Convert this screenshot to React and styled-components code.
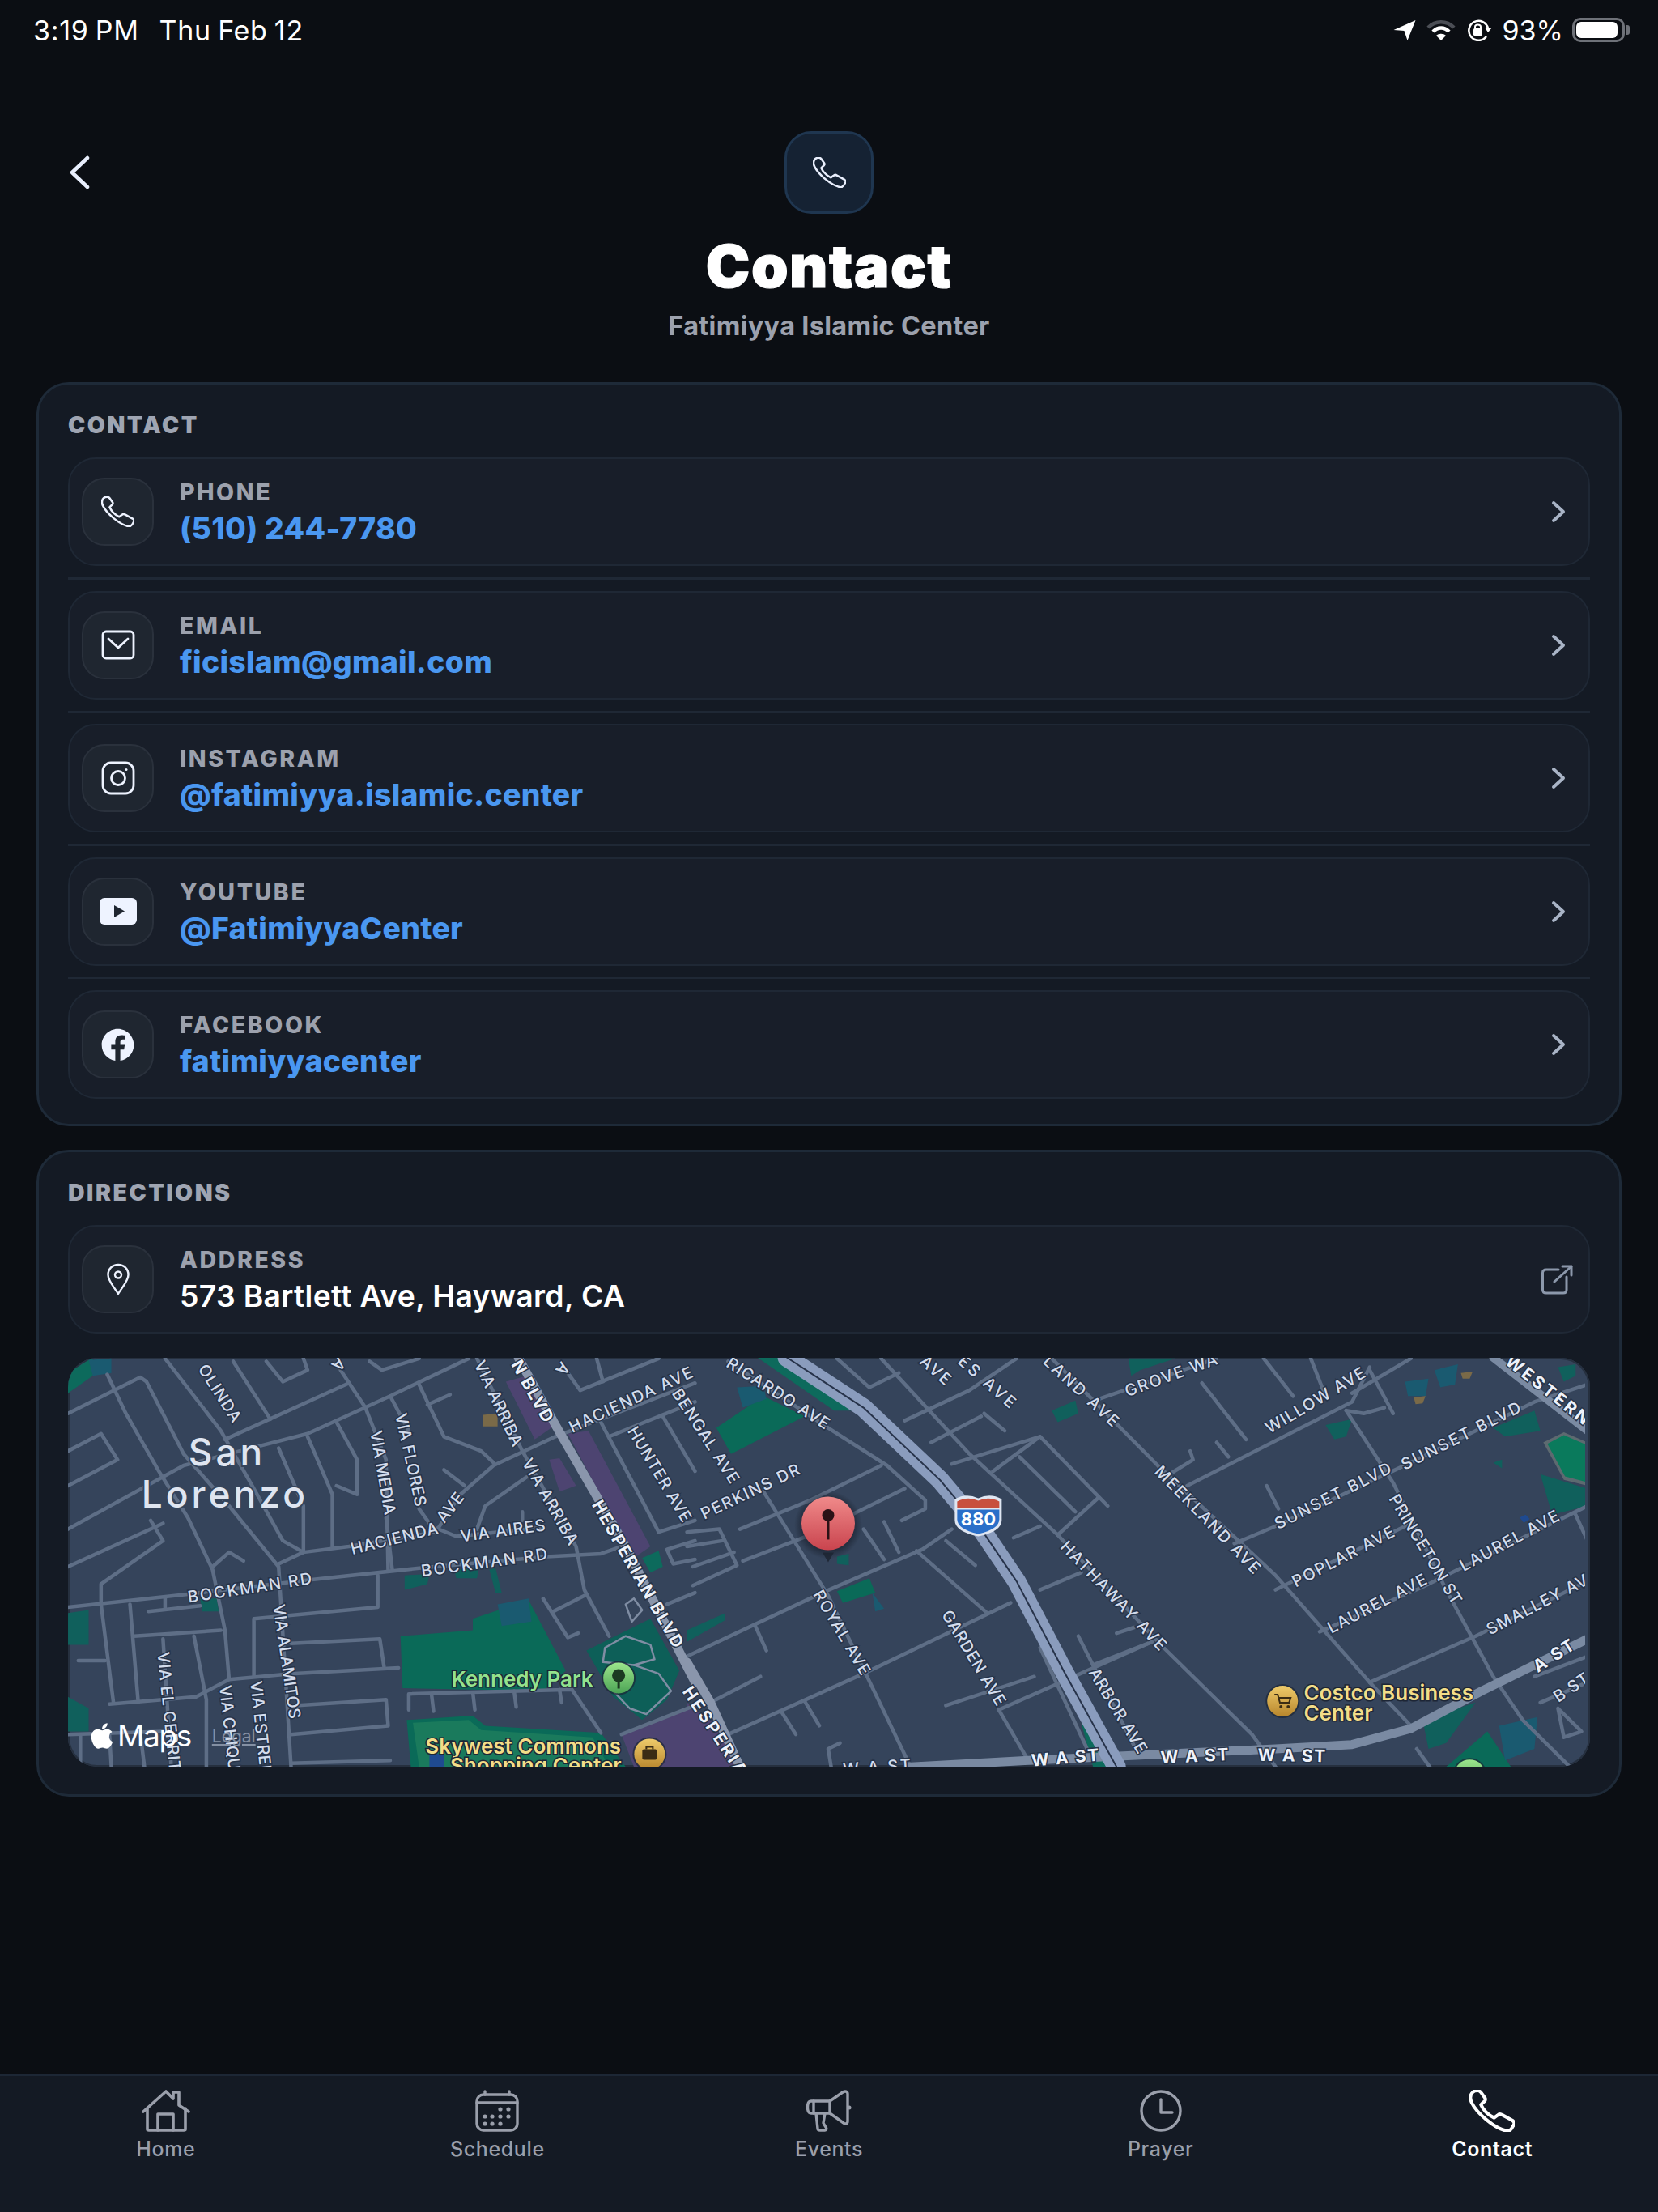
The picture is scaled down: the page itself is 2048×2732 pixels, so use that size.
import React from 'react'
import styled, {createGlobalStyle} from 'styled-components'
import {FaApple, FaFacebook} from 'react-icons/fa'

const GlobalStyle = createGlobalStyle`
    html, body {
        margin: 0;
        padding: 0;
        background: #0b0e13;
        font-family: Inter, "Liberation Sans", sans-serif;
    }
    * {
        box-sizing: border-box;
    }
`
const Page = styled.div`
    display: flex;
    flex-direction: column;
    width: 2048px;
    height: 2732px;
    overflow: hidden;
    background: #0b0e13;
`
const StatusBar = styled.div`
    display: flex;
    align-items: center;
    justify-content: space-between;
    height: 74px;
    padding: 0 37px 0 41px;
    color: #fff;
    font-size: 34px;
    font-weight: 400;
`
const StatusClock = styled.div`
    display: flex;
    gap: 25px;
    letter-spacing: 0.7px;
    word-spacing: -2px;
`
const StatusIcons = styled.div`
    display: flex;
    align-items: center;
    gap: 13px;
`
const Battery = styled.div`
    position: relative;
    width: 65px;
    height: 30px;
    margin: 0 4px 0 -2px;
    padding: 2px;
    border: 3px solid #6e7178;
    border-radius: 10px;
    &::before {
        content: '';
        display: block;
        height: 100%;
        width: 93%;
        background: #fff;
        border-radius: 6px;
    }
    &::after {
        content: '';
        position: absolute;
        right: -9px;
        top: 6px;
        width: 4px;
        height: 12px;
        background: #6e7178;
        border-radius: 0 3px 3px 0;
    }
`
const Header = styled.header`
    position: relative;
    display: flex;
    flex-direction: column;
    align-items: center;
    padding: 88px 0 49px;
`
const BackButton = styled.div`
    position: absolute;
    left: 85px;
    top: 118px;
    color: #e8eefc;
    svg {
        display: block;
    }
`
const HeaderIcon = styled.div`
    display: flex;
    align-items: center;
    justify-content: center;
    width: 110px;
    height: 102px;
    background: #152233;
    border: 3px solid #1f3650;
    border-radius: 33px;
    color: #e8eefc;
`
const Title = styled.h1`
    margin: 23px 0 0;
    color: #fff;
    font-size: 73px;
    line-height: 84px;
    font-weight: 900;
    letter-spacing: 1.5px;
    -webkit-text-stroke: 1.2px #fff;
`
const Subtitle = styled.p`
    margin: 12px 0 0;
    color: #9ca1ad;
    font-size: 32.5px;
    line-height: 40px;
    font-weight: 700;
    letter-spacing: 0.3px;
`
const Card = styled.section`
    margin: 0 45px 29px;
    padding: 32px 36px ${(p) => p.$bottom}px;
    background: #141a24;
    border: 3px solid #1e2a38;
    border-radius: 40px;
`
const SectionLabel = styled.h2`
    margin: 0 0 22px;
    color: #9fa5b2;
    font-size: 28.5px;
    line-height: 36px;
    font-weight: 900;
    letter-spacing: 2.5px;
`
const Row = styled.div`
    display: flex;
    align-items: center;
    height: 134px;
    padding: 0 28px 0 15px;
    background: #181e29;
    border: 2.5px solid #1f2835;
    border-radius: 34px;
`
const Divider = styled.div`
    height: 2.5px;
    margin: 14px 0;
    background: #1f2835;
`
const IconBox = styled.div`
    display: flex;
    align-items: center;
    justify-content: center;
    flex: none;
    width: 89px;
    height: 84px;
    margin-right: 31px;
    background: #1f2630;
    border: 2.5px solid #2a313c;
    border-radius: 28px;
    color: #eef3ff;
`
const RowText = styled.div`
    display: flex;
    flex-direction: column;
    flex: 1;
    gap: 4px;
    margin-top: 2px;
    padding-left: 1px;
`
const RowLabel = styled.div`
    color: #9ca1ad;
    font-size: 28.5px;
    line-height: 36px;
    font-weight: 800;
    letter-spacing: 2.6px;
`
const RowValue = styled.div`
    color: ${(p) => (p.$plain ? '#fff' : '#4a97f0')};
    font-size: ${(p) => (p.$plain ? 37.3 : 37.3)}px;
    line-height: 46px;
    font-weight: ${(p) => (p.$plain ? 600 : 800)};
    letter-spacing: 0.3px;
`
const RowAction = styled.div`
    flex: none;
    display: flex;
    margin-right: ${(p) => p.$shift || 0}px;
    color: ${(p) => p.$color || '#a9b4c6'};
`
const MapFrame = styled.div`
    position: relative;
    height: 505px;
    margin-top: 30px;
    overflow: hidden;
    background: #35445b;
    border-radius: 36px;
    box-shadow: inset 0 0 0 2px #26303f;
    svg.map {
        display: block;
    }
`
const Attribution = styled.div`
    position: absolute;
    left: 24px;
    bottom: 16px;
    display: flex;
    align-items: center;
    color: #fff;
`
const MapsWord = styled.span`
    font-size: 37px;
    line-height: 44px;
    letter-spacing: -1.4px;
    margin-left: 1px;
    font-weight: 400;
`
const Legal = styled.span`
    margin-left: 26px;
    color: #8490a3;
    font-size: 21px;
    text-decoration: underline;
`
const TabBar = styled.nav`
    display: grid;
    grid-template-columns: repeat(5, 1fr);
    height: 171px;
    margin-top: auto;
    padding-top: 17px;
    background: #141a24;
    border-top: 3px solid #1d2735;
`
const Tab = styled.div`
    display: flex;
    flex-direction: column;
    align-items: center;
    color: ${(p) => (p.$active ? '#fff' : '#9a9fab')};
`
const TabIcon = styled.div`
    display: flex;
    align-items: center;
    justify-content: center;
    height: 52px;
`
const TabLabel = styled.span`
    margin-top: 6px;
    font-size: 25px;
    line-height: 30px;
    font-weight: ${(p) => (p.$active ? 600 : 500)};
    letter-spacing: 0.6px;
`

// map pieces
const Road = styled.polyline`
    fill: none;
    stroke: ${(p) => p.$color || '#5e6e86'};
    stroke-width: ${(p) => p.$width || 4.5}px;
    stroke-linejoin: round;
    stroke-linecap: round;
`
const Area = styled.polygon`
    fill: ${(p) => p.$fill};
`
const StreetName = styled.text`
    font-family: Inter, "Liberation Sans", sans-serif;
    font-size: ${(p) => (p.$bright ? 21 : 20)}px;
    font-weight: ${(p) => (p.$bright ? 700 : 500)};
    fill: ${(p) => (p.$bright ? '#eef2fa' : '#d3dcec')};
    stroke: #263348;
    stroke-width: 3px;
    paint-order: stroke;
    text-anchor: middle;
    dominant-baseline: central;
`
const CityName = styled.text`
    font-family: Inter, "Liberation Sans", sans-serif;
    font-size: 46px;
    font-weight: 500;
    fill: #dfe5f0;
    stroke: #35445b;
    stroke-width: 4px;
    paint-order: stroke;
    text-anchor: middle;
    letter-spacing: 4px;
`
const PoiName = styled.text`
    font-family: Inter, "Liberation Sans", sans-serif;
    font-size: 26px;
    font-weight: 600;
    fill: ${(p) => p.$color};
    stroke: #1d2636;
    stroke-width: 3px;
    paint-order: stroke;
`

// zoomed reference coordinates -> page coordinates
const A = (x, y) => [60 + x / 1.96, 1660 + y / 2.8]
const B = (x, y) => [850 + x * 0.727, 1660 + y / 2.8]
const O = (x, y) => [x * 1.743, y * 1.743]

const toPoints = (flat, conv) => {
    const out = []
    for (let i = 0; i < flat.length; i += 2) out.push(conv(flat[i], flat[i + 1]).join(','))
    return out.join(' ')
}

const areasA = [
    ['#0d6a5c', [50, 170, 50, 100, 100, 55, 110, 50, 110, 110]],
    ['#1a5a70', [100, 55, 155, 50, 155, 100, 110, 110]],
    ['#0a6a58', [855, 1010, 1030, 990, 1030, 950, 1165, 885, 1255, 1130, 1200, 1200, 860, 1190]],
    ['#1a5a70', [1090, 900, 1165, 880, 1172, 960, 1100, 975]],
    ['#10605c', [865, 800, 925, 795, 920, 830, 865, 850]],
    ['#10605c', [985, 780, 1045, 775, 1040, 810, 990, 810]],
    ['#10605c', [1070, 780, 1085, 775, 1100, 860, 1085, 860]],
    ['#0d5f58', [1305, 1060, 1460, 950, 1530, 1130, 1500, 1230, 1440, 1300, 1370, 1220]],
    ['#0a6a58', [870, 1300, 1030, 1285, 1060, 1320, 1340, 1345, 1400, 1462, 880, 1462]],
    ['#1a7a5c', [885, 1310, 1020, 1300, 1050, 1335, 1320, 1360, 1360, 1462, 900, 1462]],
    ['#1f4a90', [925, 1420, 960, 1415, 960, 1462, 925, 1462]],
    ['#4d4471', [1110, 130, 1160, 110, 1230, 280, 1180, 330]],
    ['#4d4471', [1260, 310, 1310, 300, 1460, 700, 1420, 740]],
    ['#4d4471', [1215, 400, 1240, 395, 1280, 490, 1240, 510]],
    ['#4d4471', [1390, 1350, 1568, 1250, 1568, 1462, 1420, 1462]],
    ['#0d6a5c', [1440, 740, 1480, 715, 1490, 770, 1460, 790]],
    ['#10605c', [370, 880, 410, 880, 415, 925, 375, 925]],
    ['#10605c', [50, 930, 100, 920, 100, 1040, 50, 1040]],
    ['#10605c', [50, 1220, 100, 1260, 100, 1340, 50, 1340]],
    ['#7a6a48', [1055, 245, 1090, 240, 1090, 285, 1055, 285]],
]
const areasB = [
    ['#0a6a58', [50, 290, 130, 180, 200, 250, 75, 380]],
    ['#1a5a70', [85, 150, 130, 145, 135, 190, 95, 220]],
    ['#10605c', [620, 230, 660, 195, 665, 240, 630, 270]],
    ['#10605c', [255, 735, 275, 725, 275, 765, 255, 760]],
    ['#0a6a58', [255, 855, 310, 810, 320, 860, 265, 895]],
    ['#1a5a70', [315, 860, 335, 915, 320, 925]],
    ['#10605c', [0, 990, 65, 930, 65, 955, 0, 1030]],
    ['#0d6a5c', [120, 47, 170, 47, 290, 230, 250, 230]],
    ['#10605c', [750, 50, 830, 50, 770, 90, 755, 110]],
    ['#10605c', [1085, 280, 1130, 260, 1120, 320, 1100, 330]],
    ['#1a5a70', [1220, 130, 1260, 120, 1255, 180, 1225, 180]],
    ['#1a5a70', [1270, 90, 1310, 70, 1305, 140, 1280, 150]],
    ['#7a6a48', [1315, 100, 1335, 95, 1330, 120, 1318, 120]],
    ['#7a6a48', [1235, 185, 1255, 180, 1250, 205, 1238, 208]],
    ['#10605c', [1480, 80, 1510, 70, 1510, 110, 1490, 130]],
    ['#10605c', [1370, 290, 1440, 230, 1450, 300, 1390, 320]],
    ['#5d6a70', [1455, 340, 1490, 305, 1530, 340, 1530, 490, 1490, 470]],
    ['#0a7a5c', [1462, 345, 1490, 315, 1530, 350, 1530, 478, 1492, 458]],
    ['#10605c', [1450, 450, 1530, 500, 1530, 560, 1470, 590]],
    ['#10605c', [1370, 410, 1385, 400, 1385, 430]],
    ['#1f4a90', [1415, 600, 1425, 590, 1432, 605, 1422, 618]],
    ['#10605c', [1250, 1300, 1340, 1240, 1290, 1380, 1260, 1400]],
    ['#0a6a58', [1290, 1462, 1360, 1340, 1400, 1462]],
    ['#1a5a70', [1380, 1320, 1445, 1290, 1440, 1400, 1390, 1440]],
    ['#0d6a5c', [670, 1310, 730, 1462, 690, 1462]],
    ['#4d4471', [0, 1240, 40, 1300, 90, 1462, 0, 1462]],
]
const roadsA = [
    [50, 240, 225, 115, 240, 130, 330, 380, 440, 560, 560, 770, 590, 1462],
    [145, 105, 190, 240, 270, 440, 340, 600, 400, 780, 430, 990, 440, 1160],
    [285, 50, 420, 300, 500, 500, 570, 680, 620, 720],
    [50, 490, 170, 400, 130, 310, 50, 370],
    [50, 640, 330, 420, 630, 310, 830, 180, 1020, 50],
    [430, 330, 730, 135],
    [50, 770, 280, 620],
    [130, 900, 130, 830, 280, 680, 250, 610],
    [50, 910, 340, 865, 640, 815, 900, 775, 1210, 735, 1340, 725, 1380, 705],
    [560, 760, 620, 720, 730, 700, 940, 650, 1000, 520, 1080, 420, 1230, 320, 1568, 135],
    [710, 90, 770, 220, 820, 400, 825, 780],
    [500, 1150, 500, 950, 800, 910, 800, 800],
    [210, 1010, 420, 990],
    [130, 900, 160, 1240],
    [200, 900, 220, 1240],
    [245, 925, 370, 905],
    [285, 880, 285, 915],
    [280, 1020, 300, 1462],
    [355, 1010, 385, 1230, 385, 1462],
    [150, 1245, 360, 1220, 440, 1160, 590, 1140, 850, 1120],
    [590, 1035, 805, 1020, 815, 1115],
    [600, 1250, 820, 1230, 825, 1320, 590, 1350],
    [590, 1450, 830, 1440],
    [75, 1095, 140, 1095],
    [50, 1350, 280, 1340],
    [80, 1350, 80, 1462],
    [150, 1345, 155, 1462],
    [225, 1345, 235, 1462],
    [560, 360, 620, 560, 620, 720],
    [630, 320, 690, 520, 690, 705],
    [700, 270, 750, 400, 750, 520, 700, 490],
    [830, 180, 875, 300],
    [900, 140, 960, 320, 1050, 370, 1080, 410],
    [920, 210, 975, 175],
    [960, 435, 1010, 490],
    [1040, 640, 1060, 560, 1160, 460],
    [1150, 580, 1150, 610],
    [900, 570, 930, 630, 990, 665, 1200, 635],
    [820, 600, 835, 780],
    [1040, 50, 1150, 370, 1280, 700, 1300, 850, 1360, 1010],
    [1200, 880, 1260, 1015, 1285, 1000],
    [1225, 925, 1300, 870],
    [1340, 270, 1480, 650, 1568, 610],
    [1360, 320, 1568, 200],
    [1490, 250, 1568, 440],
    [1568, 680, 1500, 710, 1515, 760, 1568, 745],
    [1500, 900, 1568, 860],
    [450, 60, 540, 260],
    [530, 60, 570, 130, 630, 90, 620, 50],
    [780, 60, 810, 90, 900, 50],
    [1255, 90, 1290, 160, 1480, 50],
    [1330, 50, 1345, 130],
    [875, 1265, 875, 1210, 1270, 1195, 1340, 1345],
    [930, 1210, 935, 1270],
    [1030, 1205, 1035, 1265],
    [1130, 1200, 1135, 1255],
    [1240, 1195, 1245, 1240],
    [1390, 1350, 1568, 1250],
    [400, 770, 440, 720, 475, 750],
]
const roadsB = [
    [70, 60, 240, 290, 340, 420, 405, 540, 405, 570, 365, 610],
    [255, 50, 310, 150, 360, 100],
    [330, 50, 480, 380, 630, 660, 810, 1050, 960, 1350, 1000, 1462],
    [370, 265, 480, 160, 560, 50],
    [415, 340, 500, 250],
    [450, 415, 600, 320, 715, 560],
    [520, 440, 600, 320],
    [565, 390, 660, 580],
    [505, 240, 540, 300],
    [620, 50, 800, 420, 1000, 800, 1160, 1170, 1230, 1320],
    [630, 660, 700, 530],
    [555, 670, 600, 630],
    [600, 850, 670, 790],
    [730, 1000, 760, 980],
    [665, 1010, 690, 1110, 790, 1030],
    [700, 190, 900, 50],
    [875, 135, 950, 330],
    [900, 340, 920, 390],
    [850, 490, 1130, 200, 1160, 80],
    [820, 450, 860, 400, 855, 370],
    [980, 50, 1030, 180],
    [1060, 50, 1085, 180],
    [1130, 170, 1230, 50],
    [1160, 90, 1200, 240],
    [1120, 230, 1150, 240, 1185, 220],
    [1120, 230, 1200, 480, 1290, 850, 1370, 1150, 1420, 1300, 1500, 1462],
    [930, 690, 1000, 630, 1240, 400, 1440, 200, 1530, 140],
    [1000, 850, 1230, 620],
    [1075, 995, 1250, 840, 1530, 560],
    [1160, 1170, 1340, 1010, 1530, 820],
    [985, 490, 1005, 570],
    [1510, 590, 1530, 680],
    [1440, 1150, 1530, 1080],
    [1450, 1240, 1530, 1170],
    [1480, 1260, 1520, 1340, 1490, 1360, 1480, 1260],
    [130, 510, 240, 870, 380, 1462],
    [0, 1080, 230, 860, 400, 710, 450, 640],
    [90, 640, 210, 540, 330, 420],
    [95, 750, 210, 660, 370, 500],
    [0, 650, 55, 640, 85, 765, 10, 835],
    [10, 770, 80, 720],
    [0, 700, 60, 680],
    [300, 640, 335, 745],
    [335, 615, 360, 720],
    [390, 715, 510, 930],
    [440, 680, 490, 765],
    [70, 1350, 300, 1140, 550, 895],
    [115, 970, 135, 1060],
    [530, 1265, 790, 1030],
    [530, 1265, 580, 1440],
    [440, 1250, 590, 1150],
    [40, 1240, 125, 1150],
    [160, 1270, 185, 1350],
    [200, 1235, 225, 1320],
    [260, 1380, 240, 1400, 245, 1462],
    [600, 1050, 680, 1400],
    [690, 1110, 770, 1430],
    [1240, 1400, 1262, 1462],
]
// paths through the park beside Kennedy Park
const parkPaths = [
    [1345, 1100, 1350, 1050, 1400, 1010, 1460, 1040, 1470, 1090, 1420, 1110, 1345, 1100],
    [1420, 1110, 1480, 1140, 1510, 1200, 1450, 1280, 1410, 1260, 1370, 1200],
    [1420, 880, 1400, 900, 1415, 960, 1440, 920, 1420, 880],
]
const labels = [
    ['OLINDA', A, 375, 75, 460, 265],
    ['A', A, 715, 55, 695, 85],
    ['N BLVD', A, 1135, 60, 1215, 265, true],
    ['VIA ARRIBA', A, 1045, 60, 1140, 350],
    ['A', A, 1255, 70, 1240, 100],
    ['HACIENDA AVE', A, 1265, 290, 1560, 95],
    ['BENGAL AVE', O, 480, 985, 522, 1050],
    ['VIA MEDIA', A, 795, 300, 830, 590],
    ['VIA FLORES', A, 855, 240, 905, 560],
    ['VIA ARRIBA', A, 1160, 400, 1275, 690],
    ['HUNTER AVE', A, 1415, 290, 1550, 610],
    ['HESPERIAN BLVD', A, 1330, 545, 1530, 1045, true],
    ['HACIENDA', A, 735, 710, 945, 635],
    ['AVE', A, 950, 610, 1000, 520],
    ['VIA AIRES', A, 1000, 665, 1205, 625],
    ['BOCKMAN RD', A, 905, 785, 1210, 725],
    ['BOCKMAN RD', A, 340, 875, 640, 810],
    ['VIA ALAMITOS', A, 560, 900, 600, 1295],
    ['VIA EL CERRITO', A, 280, 1065, 312, 1520],
    ['VIA CHIQUITA', A, 430, 1180, 460, 1560],
    ['VIA ESTRELLA', A, 505, 1165, 535, 1560],
    ['RICARDO AVE', B, 70, 60, 240, 280],
    ['AVE', B, 400, 50, 445, 130],
    ['ES AVE', B, 465, 50, 555, 210],
    ['LAND AVE', B, 610, 50, 730, 275],
    ['GROVE WA', B, 745, 165, 900, 50],
    ['WILLOW AVE', B, 985, 295, 1150, 95],
    ['WESTERN', B, 1395, 50, 1530, 265, true],
    ['SUNSET BLVD', B, 1000, 625, 1195, 425],
    ['SUNSET BLVD', B, 1215, 420, 1415, 215],
    ['MEEKLAND AVE', B, 800, 430, 970, 785],
    ['PERKINS DR', B, 25, 590, 190, 430],
    ['HATHAWAY AVE', B, 640, 690, 810, 1050],
    ['POPLAR AVE', B, 1030, 825, 1200, 645],
    ['PRINCETON ST', B, 1200, 525, 1310, 895],
    ['LAUREL AVE', B, 1090, 985, 1255, 810],
    ['LAUREL AVE', B, 1315, 770, 1480, 590],
    ['SMALLEY AVE', B, 1360, 990, 1545, 795],
    ['A ST', B, 1440, 1120, 1505, 1035, true],
    ['B ST', B, 1475, 1225, 1530, 1150],
    ['ROYAL AVE', B, 222, 855, 305, 1140],
    ['GARDEN AVE', B, 440, 925, 535, 1245],
    ['ARBOR AVE', B, 690, 1125, 775, 1410],
    ['W A ST', B, 585, 1440, 700, 1420, true],
    ['W A ST', B, 805, 1430, 920, 1418, true],
    ['W A ST', B, 970, 1420, 1085, 1425, true],
    ['W A ST', B, 265, 1470, 380, 1455],
    ['HESPERIAN', B, 0, 1190, 110, 1530, true],
]

const Label = ({text, conv, x1, y1, x2, y2, bright}) => {
    const [ax, ay] = conv(x1, y1)
    const [bx, by] = conv(x2, y2)
    const angle = (Math.atan2(by - ay, bx - ax) * 180) / Math.PI
    const cx = (ax + bx) / 2
    const cy = (ay + by) / 2
    const len = Math.hypot(bx - ax, by - ay)
    return (
        <StreetName
            $bright={bright}
            x={cx}
            y={cy}
            transform={`rotate(${angle} ${cx} ${cy})`}
            textLength={text.length > 1 ? len : undefined}
            lengthAdjust="spacing">
            {text}
        </StreetName>
    )
}

const Bubble = ({x, y, id, children}) => (
    <g transform={`translate(${x} ${y})`}>
        <circle r="21" fill="#1d2636" opacity="0.7" />
        <circle r="19" fill={`url(#${id})`} />
        {children}
    </g>
)

const MapArt = () => {
    const hw = [170, 47, 300, 220, 430, 470, 500, 640, 560, 820, 640, 1130, 730, 1462]
    const west = [1370, 47, 1530, 300]
    const waSt = [380, 1462, 580, 1440, 1000, 1400, 1130, 1385, 1230, 1330, 1350, 1200, 1530, 1020]
    const hesp = [1140, 47, 1230, 280, 1400, 700, 1568, 1170]
    const [pinX, pinY] = B(240, 620)
    const [shX, shY] = B(495, 598)
    return (
        <svg className="map" width="1874" height="505" viewBox="85.5 1677 1874 505">
            <defs>
                <linearGradient id="gold" x1="0" y1="0" x2="0" y2="1">
                    <stop offset="0" stopColor="#eecb6b" />
                    <stop offset="1" stopColor="#b8862c" />
                </linearGradient>
                <linearGradient id="leaf" x1="0" y1="0" x2="0" y2="1">
                    <stop offset="0" stopColor="#9ce58c" />
                    <stop offset="1" stopColor="#4ca455" />
                </linearGradient>
                <linearGradient id="pin" x1="0" y1="0" x2="0" y2="1">
                    <stop offset="0" stopColor="#f08a8a" />
                    <stop offset="1" stopColor="#c9444e" />
                </linearGradient>
                <radialGradient id="pinShadow">
                    <stop offset="0.6" stopColor="#10151f" stopOpacity="0.8" />
                    <stop offset="1" stopColor="#10151f" stopOpacity="0" />
                </radialGradient>
            </defs>
            {areasA.map(([fill, pts], i) => (
                <Area key={i} $fill={fill} points={toPoints(pts, A)} />
            ))}
            {areasB.map(([fill, pts], i) => (
                <Area key={i} $fill={fill} points={toPoints(pts, B)} />
            ))}
            {roadsA.map((pts, i) => (
                <Road key={i} points={toPoints(pts, A)} />
            ))}
            {roadsB.map((pts, i) => (
                <Road key={i} points={toPoints(pts, B)} />
            ))}
            {parkPaths.map((pts, i) => (
                <Road key={i} points={toPoints(pts, A)} $color="#7f8da3" $width={2.5} />
            ))}
            <Road points={toPoints(waSt, B)} $color="#7a8aa2" $width={11} />
            <Road points={toPoints(hesp, A)} $color="#8a96ac" $width={11} />
            <Road points={toPoints([0, 1100, 40, 1240, 90, 1462], B)} $color="#8a96ac" $width={11} />
            <Road points={toPoints(hw, B)} $color="#8a9cbd" $width={23} />
            <Road points={toPoints(hw, B)} $color="#27334a" $width={2} />
            <Road points={toPoints(west, B)} $color="#7a8aa2" $width={10} />
            {labels.map(([text, conv, x1, y1, x2, y2, bright], i) => (
                <Label key={i} text={text} conv={conv} x1={x1} y1={y1} x2={x2} y2={y2} bright={bright} />
            ))}
            <CityName x={A(435, 0)[0]} y="1810">San</CityName>
            <CityName x={A(430, 0)[0]} y="1862">Lorenzo</CityName>

            {/* pois */}
            <PoiName $color="#93e38d" x={A(978, 0)[0]} y="2083">Kennedy Park</PoiName>
            <Bubble x={A(1383, 0)[0]} y={A(0, 1155)[1]} id="leaf">
                <circle cy="-3" r="8" fill="#1c3a22" />
                <rect x="-1.5" y="2" width="3" height="11" fill="#1c3a22" />
            </Bubble>
            <PoiName $color="#f2dd88" x={A(915, 0)[0]} y="2166">Skywest Commons</PoiName>
            <PoiName $color="#f2dd88" x={A(975, 0)[0]} y="2190">Shopping Center</PoiName>
            <Bubble x={A(1458, 0)[0]} y={A(0, 1418)[1]} id="gold">
                <rect x="-9" y="-6" width="18" height="13" rx="2" fill="#3a2c14" />
                <path d="M-4 -6 v-3 h8 v3" fill="none" stroke="#3a2c14" strokeWidth="2" />
            </Bubble>
            <PoiName $color="#f2dd88" x={B(1048, 0)[0]} y="2100">Costco Business</PoiName>
            <PoiName $color="#f2dd88" x={B(1048, 0)[0]} y="2125">Center</PoiName>
            <Bubble x={B(1012, 0)[0]} y={B(0, 1235)[1]} id="gold">
                <path d="M-10 -8 h4 l3 11 h11 M-5 -4 h15 l-2 6 h-11" fill="none" stroke="#3a2c14" strokeWidth="2" />
                <circle cx="-2" cy="7" r="2" fill="#3a2c14" />
                <circle cx="7" cy="7" r="2" fill="#3a2c14" />
            </Bubble>
            <Bubble x={B(1330, 0)[0]} y={B(0, 1490)[1]} id="leaf" />

            {/* i-880 shield */}
            <g transform={`translate(${shX} ${shY})`}>
                <path d="M-29 -22 Q-15 -30 0 -23 Q15 -30 29 -22 L29 4 Q29 18 0 24 Q-29 18 -29 4 Z" fill="#dfe6f2" />
                <path d="M-26 -19 Q-13 -26 0 -20 Q13 -26 26 -19 L26 -11 H-26 Z" fill="#c8503f" />
                <path d="M-26 -9 H26 V3 Q26 15 0 21 Q-26 15 -26 3 Z" fill="#2a6fc9" />
                <text
                    x="0"
                    y="10"
                    fill="#fff"
                    fontFamily="Inter, sans-serif"
                    fontSize="22"
                    fontWeight="700"
                    textAnchor="middle">
                    880
                </text>
            </g>

            {/* selected pin */}
            <g transform={`translate(${pinX} ${pinY})`}>
                <circle r="42" cy="2" fill="url(#pinShadow)" />
                <path d="M-7 36 L0 48 L7 36 Z" fill="#1c2330" opacity="0.8" />
                <circle r="33" fill="url(#pin)" />
                <circle cy="-10" r="7.5" fill="#2a1216" />
                <rect x="-1.5" y="-10" width="3" height="30" fill="#2a1216" />
            </g>
        </svg>
    )
}

// icons
const Stroke = styled.svg`
    display: block;
    fill: none;
    stroke: currentColor;
    stroke-width: ${(p) => p.$weight || 1.5};
    stroke-linecap: round;
    stroke-linejoin: round;
`
const handset =
    'M10 1C12 1 13 2 14 3L19 10C20 12 19 14 17 15L14 18C17 25 24 31 30 34L34 31C36 29 38 29 40 30.5L52 37C55 39 55 41 53 44C51 48 49 50 46 50C30 47 9 28 3 16C0 10 1 6 4 3C6 1 8 1 10 1Z'

const PhoneIcon = ({width = 41, height = 38, weight = 3.4}) => (
    <Stroke $weight={weight} width={width} height={height} viewBox="0 0 55 51">
        <path d={handset} />
    </Stroke>
)
const MailIcon = () => (
    <Stroke width="42" height="42" viewBox="0 0 42 42" $weight={2.8}>
        <rect x="2" y="4" width="38" height="33" rx="4" />
        <path d="M9 13L21 24L33 13" />
    </Stroke>
)
const InstagramIcon = () => (
    <Stroke width="42" height="42" viewBox="0 0 42 42" $weight={2.8}>
        <rect x="2" y="2" width="38" height="38" rx="10" />
        <circle cx="21" cy="21" r="8.5" />
        <circle cx="31" cy="10.5" r="1.5" fill="currentColor" stroke="none" />
    </Stroke>
)
const YoutubeIcon = () => (
    <svg width="46" height="34" viewBox="0 0 46 34" style={{display: 'block'}}>
        <rect width="46" height="33" rx="6" fill="currentColor" />
        <path d="M18 9L31 16.5L18 24Z" fill="#1f2630" />
    </svg>
)
const PinIcon = () => (
    <Stroke width="30" height="40" viewBox="0 0 30 40" $weight={2.4}>
        <path d="M15 38C9 28 2.5 22 2.5 14.5C2.5 7 8 2 15 2C22 2 27.5 7 27.5 14.5C27.5 22 21 28 15 38Z" />
        <circle cx="15" cy="14.5" r="4" />
    </Stroke>
)
const ChevronRight = () => (
    <Stroke width="18" height="28" viewBox="0 0 18 28" $weight={4}>
        <path d="M3 3L15 14L3 25" />
    </Stroke>
)
const ExternalIcon = () => (
    <Stroke width="40" height="37" viewBox="0 0 40 37" $weight={3}>
        <path d="M21 6H6Q1.500 6 1.500 10V31Q1.500 35 6 35H27Q31 35 31 31V15" />
        <path d="M26 2H37V13" />
        <path d="M37 2L16 21" />
    </Stroke>
)
const HomeIcon = () => (
    <Stroke width="60" height="52" viewBox="0 0 60 52" $weight={3.6}>
        <path d="M2 27L30 2L39 11V3H46V19L58 27" />
        <path d="M7 23V49C7 50 8 50 9 50H52C53 50 54 50 54 49V23" />
        <path d="M20 50V30H39V50" />
    </Stroke>
)
const CalendarIcon = () => (
    <Stroke width="54" height="52" viewBox="0 0 54 52" $weight={3.4}>
        <rect x="2" y="6" width="50" height="44" rx="8" />
        <path d="M2 16H52M12 2V6M42 2V6" />
        {[
            [31, 24], [41, 24],
            [12, 33], [21, 33], [31, 33], [41, 33],
            [12, 42], [21, 42], [31, 42],
        ].map(([cx, cy]) => (
            <circle key={`${cx}-${cy}`} cx={cx} cy={cy} r="2.6" fill="currentColor" stroke="none" />
        ))}
    </Stroke>
)
const MegaphoneIcon = () => (
    <Stroke width="56" height="52" viewBox="0 0 56 52" $weight={3.4}>
        <path d="M6 14H29L45 3C48 1 51 2 51 5V39C51 42 48 43 46 41L29 29H6C2 29 1.500 25 1.500 21.500C1.500 18 2 14 6 14Z" />
        <path d="M9 14V29M29 14V29" />
        <path d="M12 29L14 48C14 50 15 50 17 50H23C25 50 25 48 24.500 47L21 41L23 29" />
        <circle cx="53" cy="22" r="2.500" fill="currentColor" stroke="none" />
    </Stroke>
)
const ClockIcon = () => (
    <Stroke width="52" height="52" viewBox="0 0 52 52" $weight={3.4}>
        <circle cx="26" cy="26" r="24" />
        <path d="M26 12V28H40" />
    </Stroke>
)
const Arrow = () => (
    <svg width="28" height="25" viewBox="0 0 27 25">
        <path d="M0 12L27 0L17 25L13 13Z" fill="#fff" />
    </svg>
)
const Wifi = () => (
    <svg width="36" height="25" viewBox="0 0 36 25" fill="none" strokeLinecap="butt">
        <path d="M2 9C11 0 25 0 34 9" stroke="#4b4e55" strokeWidth="4.500" />
        <path d="M8 14C14 8 22 8 28 14" stroke="#fff" strokeWidth="4.500" />
        <path d="M18 25L12 19C15 16 21 16 24 19Z" fill="#fff" />
    </svg>
)
const RotationLock = () => (
    <svg width="32" height="27" viewBox="0 0 32 27" fill="none">
        <path d="M27 11A12 12 0 1 0 25 21" stroke="#fff" strokeWidth="2.600" />
        <path d="M23 10L32 10L27 16Z" fill="#fff" />
        <rect x="9" y="11" width="11" height="9" rx="1.500" fill="#fff" />
        <path d="M11 12V9C11 5.500 18 5.500 18 9V12" stroke="#fff" strokeWidth="2" />
    </svg>
)

const contactRows = [
    {label: 'PHONE', value: '(510) 244-7780', icon: <PhoneIcon />},
    {label: 'EMAIL', value: 'ficislam@gmail.com', icon: <MailIcon />},
    {label: 'INSTAGRAM', value: '@fatimiyya.islamic.center', icon: <InstagramIcon />},
    {label: 'YOUTUBE', value: '@FatimiyyaCenter', icon: <YoutubeIcon />},
    {label: 'FACEBOOK', value: 'fatimiyyacenter', icon: <FaFacebook size={41} />},
]
const tabs = [
    {label: 'Home', icon: <HomeIcon />},
    {label: 'Schedule', icon: <CalendarIcon />},
    {label: 'Events', icon: <MegaphoneIcon />},
    {label: 'Prayer', icon: <ClockIcon />},
    {label: 'Contact', icon: <PhoneIcon width={56} height={52} weight={4} />, active: true},
]

export default function App() {
    return (
        <Page>
            <GlobalStyle />
            <StatusBar>
                <StatusClock>
                    <span>3:19 PM</span>
                    <span>Thu Feb 12</span>
                </StatusClock>
                <StatusIcons>
                    <Arrow />
                    <Wifi />
                    <RotationLock />
                    <span>93%</span>
                    <Battery />
                </StatusIcons>
            </StatusBar>
            <Header>
                <BackButton>
                    <Stroke width="26" height="42" viewBox="0 0 26 42" $weight={4.5}>
                        <path d="M23 3L4 21L23 39" />
                    </Stroke>
                </BackButton>
                <HeaderIcon>
                    <PhoneIcon />
                </HeaderIcon>
                <Title>Contact</Title>
                <Subtitle>Fatimiyya Islamic Center</Subtitle>
            </Header>
            <Card $bottom={31}>
                <SectionLabel>CONTACT</SectionLabel>
                {contactRows.map((row, i) => (
                    <React.Fragment key={row.label}>
                        {i > 0 && <Divider />}
                        <Row>
                            <IconBox>{row.icon}</IconBox>
                            <RowText>
                                <RowLabel>{row.label}</RowLabel>
                                <RowValue>{row.value}</RowValue>
                            </RowText>
                            <RowAction>
                                <ChevronRight />
                            </RowAction>
                        </Row>
                    </React.Fragment>
                ))}
            </Card>
            <Card $bottom={34}>
                <SectionLabel>DIRECTIONS</SectionLabel>
                <Row>
                    <IconBox>
                        <PinIcon />
                    </IconBox>
                    <RowText>
                        <RowLabel>ADDRESS</RowLabel>
                        <RowValue $plain>573 Bartlett Ave, Hayward, CA</RowValue>
                    </RowText>
                    <RowAction $shift={-10} $color="#8c98ab">
                        <ExternalIcon />
                    </RowAction>
                </Row>
                <MapFrame>
                    <MapArt />
                    <Attribution>
                        <FaApple size={36} />
                        <MapsWord>Maps</MapsWord>
                        <Legal>Legal</Legal>
                    </Attribution>
                </MapFrame>
            </Card>
            <TabBar>
                {tabs.map((t) => (
                    <Tab key={t.label} $active={t.active}>
                        <TabIcon>{t.icon}</TabIcon>
                        <TabLabel $active={t.active}>{t.label}</TabLabel>
                    </Tab>
                ))}
            </TabBar>
        </Page>
    )
}
